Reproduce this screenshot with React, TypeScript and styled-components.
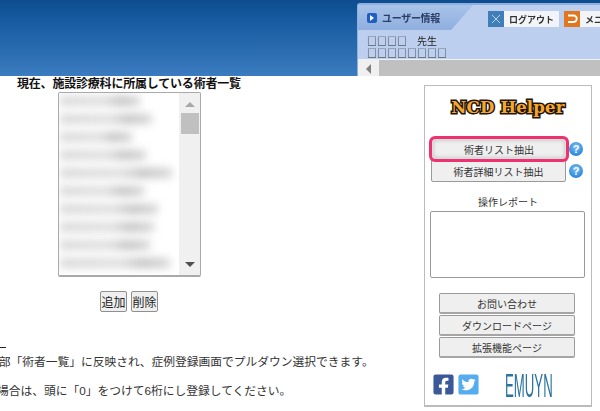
import React from "react";
import styled, { createGlobalStyle } from "styled-components";
import { FaFacebookSquare, FaTwitterSquare } from "react-icons/fa";

const Global = createGlobalStyle`
  html, body { margin: 0; padding: 0; background: #fff; overflow: hidden; }
  body { font-family: "Liberation Sans", "Noto Sans CJK JP", sans-serif; color: #222; }
  * { box-sizing: border-box; }
`;

const Page = styled.div`
  width: 600px;
  height: 411px;
  overflow: hidden;
`;
const Header = styled.header`
  height: 76px;
  background: linear-gradient(#0d4d8f 0, #175a9f 25%, #3b7bbf 100%);
  display: flex;
  justify-content: flex-end;
  align-items: flex-end;
`;
const UserPanel = styled.div`
  width: 243px;
  height: 73px;
  background: #bdcfee;
  border-top: 2px solid #8fb0dc;
  border-left: 1px solid #8fb0dc;
  border-top-left-radius: 3px;
  display: flex;
  flex-direction: column;
  overflow: hidden;
`;
const PanelTop = styled.div`
  height: 25px;
  display: flex;
  align-items: flex-start;
  flex: none;
`;
const Tab = styled.div`
  width: 115px;
  height: 25px;
  flex: none;
  background: linear-gradient(#a9c3e9, #8fafdf);
  clip-path: polygon(0 0, 100% 0, 81% 100%, 0 100%);
  display: flex;
  align-items: center;
  gap: 5px;
  padding-left: 9px;
  font-size: 10px;
  letter-spacing: -0.3px;
  font-weight: bold;
  color: #2b3f66;
  filter: blur(0.3px);
`;
const TabIcon = styled.span`
  width: 10px;
  height: 10px;
  background: #1f5fc0;
  border-radius: 2px;
  display: flex;
  align-items: center;
  justify-content: center;
  &::after {
    content: "";
    border-left: 4px solid #fff;
    border-top: 3px solid transparent;
    border-bottom: 3px solid transparent;
  }
`;
const TopButtons = styled.div`
  display: flex;
  margin-left: 15px;
  padding-top: 6px;
  gap: 5px;
`;
const TopButton = styled.div`
  display: flex;
  height: 16px;
  background: #f2f4f8;
  font-size: 9px;
  font-weight: bold;
  color: #333;
  align-items: center;
  white-space: nowrap;
  filter: blur(0.3px);
`;
const TopIcon = styled.span<{ $bg: string; $w: number }>`
  width: ${(p) => p.$w}px;
  height: 16px;
  background: ${(p) => p.$bg};
  display: flex;
  align-items: center;
  justify-content: center;
  flex: none;
`;
const TopLabel = styled.span<{ $w: number }>`
  width: ${(p) => p.$w}px;
  padding-left: 5px;
`;
const UserLines = styled.div`
  height: 29px;
  flex: none;
  padding: 5px 0 0 9px;
  font-family: "Noto Sans CJK JP", sans-serif;
  font-size: 10px;
  line-height: 12px;
  color: #222;
  overflow: hidden;
  filter: blur(0.3px);
  white-space: pre;
`;
const HScroll = styled.div`
  height: 20px;
  flex: none;
  background: #f0f0f0;
  display: flex;
  align-items: center;
`;
const ScrollLeft = styled.span`
  width: 21px;
  display: flex;
  justify-content: center;
  &::after {
    content: "";
    border-right: 5px solid #808080;
    border-top: 5px solid transparent;
    border-bottom: 5px solid transparent;
  }
`;
const ScrollThumb = styled.div`
  flex: 1;
  height: 19px;
  background: #c0c0c0;
`;

const Main = styled.main`
  display: flex;
  height: 335px;
`;
const Left = styled.section`
  width: 424px;
  flex: none;
`;
const Title = styled.h2`
  margin: 0;
  padding: 1px 0 0 17px;
  font-size: 12px;
  line-height: 15px;
  letter-spacing: -0.2px;
  font-weight: bold;
  color: #111;
`;
const ListBox = styled.div`
  width: 143px;
  height: 185px;
  margin-left: 58px;
  border: 1px solid #aaa;
  border-bottom: 2px solid #a9a9a9;
  border-radius: 2px;
  display: flex;
  overflow: hidden;
`;
const Rows = styled.div`
  flex: 1;
  display: flex;
  flex-direction: column;
  gap: 8px;
  padding: 3px 0 0 1px;
  overflow: hidden;
  background: #fff;
`;
const BlurRow = styled.div<{ $w: number }>`
  width: ${(p) => p.$w}px;
  height: 10px;
  flex: none;
  background: linear-gradient(90deg, #d8d8d8 0, #dedede 55%, #c2c2c2 75%, #d8d8d8 100%);
  filter: blur(4px);
`;
const VScroll = styled.div`
  width: 21px;
  flex: none;
  background: #f0f0f0;
  display: flex;
  flex-direction: column;
  align-items: center;
  padding: 9px 0 8px;
`;
const ArrowUp = styled.span`
  border-bottom: 5px solid #a8a8a8;
  border-left: 5px solid transparent;
  border-right: 5px solid transparent;
`;
const ArrowDown = styled.span`
  margin-top: auto;
  border-top: 5px solid #505050;
  border-left: 5px solid transparent;
  border-right: 5px solid transparent;
`;
const VThumb = styled.div`
  width: 18px;
  height: 21px;
  margin-top: 6px;
  background: #c0c0c0;
`;
const ListActions = styled.div`
  display: flex;
  gap: 4px;
  margin: 14px 0 0 100px;
`;
const SmallButton = styled.button`
  width: 27px;
  height: 21px;
  padding: 0;
  font: 12px "Liberation Sans", "Noto Sans CJK JP", sans-serif;
  color: #222;
  background: #efefef;
  border: 1px solid #8f8f8f;
  border-radius: 2px;
  white-space: nowrap;
`;
const Dash = styled.div`
  width: 6px;
  height: 1px;
  background: #222;
  margin-top: 35px;
`;
const Note = styled.p<{ $top: number; $left: number }>`
  margin: ${(p) => p.$top}px 0 0 ${(p) => p.$left}px;
  font-size: 11.75px;
  line-height: 16px;
  color: #333;
  white-space: nowrap;
`;

const Side = styled.aside`
  width: 168px;
  height: 322px;
  margin-top: 9px;
  border: 1px solid #bbb;
  border-bottom-width: 2px;
  display: flex;
  flex-direction: column;
  align-items: center;
`;
const Logo = styled.div`
  margin-top: 11px;
  height: 22px;
  font-family: "DejaVu Serif", serif;
  font-weight: bold;
  font-size: 16.5px;
  line-height: 22px;
  color: #f9a72b;
  -webkit-text-stroke: 3px #1c1408;
  paint-order: stroke fill;
  white-space: nowrap;
  letter-spacing: 0.2px;
`;
const HelperRows = styled.div`
  align-self: stretch;
  margin-top: 20px;
  padding-left: 6px;
  display: flex;
  flex-direction: column;
  gap: 1px;
`;
const HelperRow = styled.div`
  display: flex;
  align-items: center;
  gap: 3px;
`;
const PlainButton = styled.button<{ $hot?: boolean }>`
  width: ${(p) => (p.$hot ? 134 : 135)}px;
  height: ${(p) => (p.$hot ? 20 : 22)}px;
  margin-left: ${(p) => (p.$hot ? 1 : 0)}px;
  padding: 0;
  font: 10px "Liberation Sans", "Noto Sans CJK JP", sans-serif;
  color: #333;
  background: #efefef;
  border: 1px solid ${(p) => (p.$hot ? "#ddd" : "#9a9a9a")};
  position: relative;
  z-index: ${(p) => (p.$hot ? 1 : 0)};
  box-shadow: ${(p) => (p.$hot ? "0 0 0 3px #f0316f, inset 0 0 4px #bbb" : "none")};
  border-radius: ${(p) => (p.$hot ? 3 : 2)}px;
`;
const Help = styled.span`
  width: 14px;
  height: 14px;
  border-radius: 50%;
  background: radial-gradient(circle at 50% 35%, #7cc0f0, #2f8ae0 70%);
  color: #fff;
  font-size: 11px;
  font-weight: bold;
  line-height: 14px;
  text-align: center;
  flex: none;
`;
const ReportLabel = styled.div`
  margin-top: 14px;
  font-size: 10px;
  line-height: 14px;
  color: #333;
`;
const ReportBox = styled.div`
  align-self: flex-start;
  width: 155px;
  height: 67px;
  margin: 1px 0 0 5px;
  border: 1px solid #999;
  border-radius: 2px;
  background: #fff;
`;
const LinkList = styled.div`
  align-self: flex-start;
  margin: 15px 0 0 14px;
  display: flex;
  flex-direction: column;
  gap: 1px;
`;
const LinkButton = styled.button`
  width: 136px;
  height: 21px;
  padding: 0;
  font: 10px "Liberation Sans", "Noto Sans CJK JP", sans-serif;
  color: #333;
  background: #efefef;
  border: 1px solid #9a9a9a;
  border-bottom: 2px solid #a5a5a5;
  border-radius: 2px;
`;
const Social = styled.div`
  align-self: stretch;
  display: flex;
  align-items: flex-start;
  margin-top: 15px;
  padding-left: 7px;
  gap: 2px;
  height: 26px;
`;
const Brand = styled.span<{ $c: string }>`
  color: ${(p) => p.$c};
  font-size: 23px;
  line-height: 0;
  display: block;
`;
const Emuyn = styled.span`
  margin-left: 23px;
  width: 48px;
  font-size: 33px;
  line-height: 25px;
  color: #2a749f;
  display: inline-block;
  transform: scaleX(0.4);
  transform-origin: left center;
  white-space: nowrap;
`;

const rowWidths = [80, 92, 72, 86, 112, 84, 98, 94, 90, 110];

export default function App() {
  return (
    <Page>
      <Global />
      <Header>
        <UserPanel>
          <PanelTop>
            <Tab>
              <TabIcon />
              ユーザー情報
            </Tab>
            <TopButtons>
              <TopButton>
                <TopIcon $bg="#3f7eb8" $w={16}>
                  <svg width="10" height="10" viewBox="0 0 10 10">
                    <path d="M1 1l8 8M9 1l-8 8" stroke="#bcd6f0" strokeWidth="1" />
                  </svg>
                </TopIcon>
                <TopLabel $w={55}>ログアウト</TopLabel>
              </TopButton>
              <TopButton>
                <TopIcon $bg="#e2761f" $w={16}>
                  <svg width="12" height="12" viewBox="0 0 12 12" fill="none">
                    <path d="M2 2.5h5.5a3 3 0 0 1 0 6.5H2" stroke="#fff" strokeWidth="1.8" />
                  </svg>
                </TopIcon>
                <TopLabel $w={40}>メニュー</TopLabel>
              </TopButton>
            </TopButtons>
          </PanelTop>
          <UserLines>{"□□□□　先生\n□□□□□□□□"}</UserLines>
          <HScroll>
            <ScrollLeft />
            <ScrollThumb />
          </HScroll>
        </UserPanel>
      </Header>
      <Main>
        <Left>
          <Title>現在、施設診療科に所属している術者一覧</Title>
          <ListBox>
            <Rows>
              {rowWidths.map((w, i) => (
                <BlurRow key={i} $w={w} />
              ))}
            </Rows>
            <VScroll>
              <ArrowUp />
              <VThumb />
              <ArrowDown />
            </VScroll>
          </ListBox>
          <ListActions>
            <SmallButton>追加</SmallButton>
            <SmallButton>削除</SmallButton>
          </ListActions>
          <Dash />
          <Note $top={6} $left={-13}>全部「術者一覧」に反映され、症例登録画面でプルダウン選択できます。</Note>
          <Note $top={13} $left={-3}>場合は、頭に「0」をつけて6桁にし登録してください。</Note>
        </Left>
        <Side>
          <Logo>NCD Helper</Logo>
          <HelperRows>
            <HelperRow>
              <PlainButton $hot>術者リスト抽出</PlainButton>
              <Help>?</Help>
            </HelperRow>
            <HelperRow>
              <PlainButton>術者詳細リスト抽出</PlainButton>
              <Help>?</Help>
            </HelperRow>
          </HelperRows>
          <ReportLabel>操作レポート</ReportLabel>
          <ReportBox />
          <LinkList>
            <LinkButton>お問い合わせ</LinkButton>
            <LinkButton>ダウンロードページ</LinkButton>
            <LinkButton>拡張機能ページ</LinkButton>
          </LinkList>
          <Social>
            <Brand $c="#3b5998"><FaFacebookSquare /></Brand>
            <Brand $c="#55acee"><FaTwitterSquare /></Brand>
            <Emuyn>EMUYN</Emuyn>
          </Social>
        </Side>
      </Main>
    </Page>
  );
}
